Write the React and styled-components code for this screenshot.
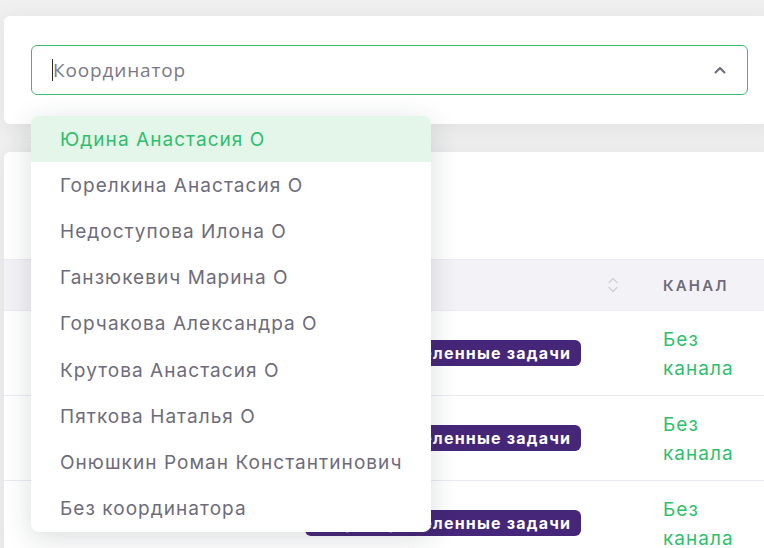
import React from "react";
import styled, { createGlobalStyle } from "styled-components";

const GlobalStyle = createGlobalStyle`
  html, body { margin: 0; padding: 0; }
  body {
    background: #f0f0f0;
    overflow: hidden;
    font-family: Inter, "Noto Sans", sans-serif;
    color: #6e6b7b;
  }
`;

const Page = styled.div`
  width: 800px;
  padding: 16px 0 0 4px;
  display: flex;
  flex-direction: column;
  gap: 28px;
`;

const Card = styled.section`
  background: #fff;
  border-radius: 6px;
  box-shadow: 0 4px 24px rgba(34, 41, 47, 0.08);
  width: 771px;
`;

const FilterCard = styled(Card)`
  padding: 29px 27px;
  box-sizing: border-box;
`;

const SelectWrap = styled.div`
  position: relative;
`;

const SelectBox = styled.div`
  height: 50px;
  box-sizing: border-box;
  border: 1px solid #3dbb6e;
  border-radius: 6px;
  display: flex;
  align-items: center;
  padding: 0 20px 0 20px;
`;

const Caret = styled.span`
  width: 1px;
  height: 22px;
  background: #2b2b2b;
`;

const Placeholder = styled.span`
  flex: 1;
  font-size: 19px;
  letter-spacing: 0.85px;
  color: #7b7886;
  font-family: "Open Sans", sans-serif;
`;

const Chevron = styled.svg`
  width: 14px;
  height: 14px;
  color: #6e6b7b;
`;

const Menu = styled.ul`
  position: absolute;
  left: 0;
  top: 71px;
  width: 400px;
  margin: 0;
  padding: 0;
  list-style: none;
  background: #fff;
  border-radius: 8px;
  overflow: hidden;
  box-shadow: 0 6px 28px rgba(34, 41, 47, 0.16);
  z-index: 10;
`;

const Option = styled.li`
  height: 46.2px;
  display: flex;
  align-items: center;
  padding-left: 29px;
  font-size: 19px;
  letter-spacing: 1.05px;
  color: ${(p) => (p.$active ? "#2fbf6c" : "#6e6b7b")};
  background: ${(p) => (p.$active ? "#e4f5ea" : "transparent")};
  white-space: nowrap;
`;

const TableCard = styled(Card)`
  display: flex;
  flex-direction: column;
  min-height: 420px;
`;

const CardHeader = styled.div`
  height: 107px;
`;

const Table = styled.div`
  display: grid;
  grid-template-columns: 274px 358px 1fr;
`;

const HeadCell = styled.div`
  height: 52px;
  box-sizing: border-box;
  background: #f3f2f7;
  border-top: 1px solid #ebe9f1;
  border-bottom: 1px solid #ebe9f1;
  display: flex;
  align-items: center;
  justify-content: space-between;
  padding: 0 16px 0 27px;
  font-size: 15px;
  font-weight: 600;
  letter-spacing: 2.2px;
  text-transform: uppercase;
  color: #6e6b7b;
`;

const SortIcon = styled.svg`
  width: 14px;
  height: 18px;
  color: #cfcdd6;
`;

const Cell = styled.div`
  height: 85px;
  box-sizing: border-box;
  border-bottom: 1px solid #ebe9f1;
  display: flex;
  align-items: center;
  padding: 0 27px;
  font-size: 19px;
  letter-spacing: 1.05px;
`;

const Badge = styled.span`
  display: inline-flex;
  align-items: center;
  height: 26px;
  padding: 0 10px 0 16px;
  border-radius: 6px;
  background: #452678;
  color: #fff;
  font-size: 16px;
  font-weight: 700;
  white-space: nowrap;
  letter-spacing: 1.2px;
`;

const Channel = styled.span`
  color: #2fbf6c;
  line-height: 29px;
  width: 80px;
  padding-top: 2px;
`;

const coordinators = [
  "Юдина Анастасия О",
  "Горелкина Анастасия О",
  "Недоступова Илона О",
  "Ганзюкевич Марина О",
  "Горчакова Александра О",
  "Крутова Анастасия О",
  "Пяткова Наталья О",
  "Онюшкин Роман Константинович",
  "Без координатора",
];

const rows = [1, 2, 3];

export default function App() {
  return (
    <>
      <GlobalStyle />
      <Page>
        <FilterCard>
          <SelectWrap>
            <SelectBox>
              <Caret />
              <Placeholder>Координатор</Placeholder>
              <Chevron viewBox="0 0 14 14" fill="none">
                <path d="M2.5 9.5 L7 5 L11.5 9.5" stroke="currentColor" strokeWidth="2" strokeLinecap="round" strokeLinejoin="round" />
              </Chevron>
            </SelectBox>
            <Menu>
              {coordinators.map((c, i) => (
                <Option key={c} $active={i === 0}>{c}</Option>
              ))}
            </Menu>
          </SelectWrap>
        </FilterCard>
        <TableCard>
          <CardHeader />
          <Table>
            <HeadCell />
            <HeadCell>
              <span />
              <SortIcon viewBox="0 0 14 18" fill="none">
                <path d="M3 6.5 L7 2.5 L11 6.5" stroke="currentColor" strokeWidth="1.3" strokeLinecap="round" strokeLinejoin="round" />
                <path d="M3 11.5 L7 15.5 L11 11.5" stroke="currentColor" strokeWidth="1.3" strokeLinecap="round" strokeLinejoin="round" />
              </SortIcon>
            </HeadCell>
            <HeadCell>Канал</HeadCell>
            {rows.map((r) => (
              <React.Fragment key={r}>
                <Cell />
                <Cell>
                  <Badge>Нераспределенные задачи</Badge>
                </Cell>
                <Cell>
                  <Channel>Без канала</Channel>
                </Cell>
              </React.Fragment>
            ))}
          </Table>
        </TableCard>
      </Page>
    </>
  );
}
